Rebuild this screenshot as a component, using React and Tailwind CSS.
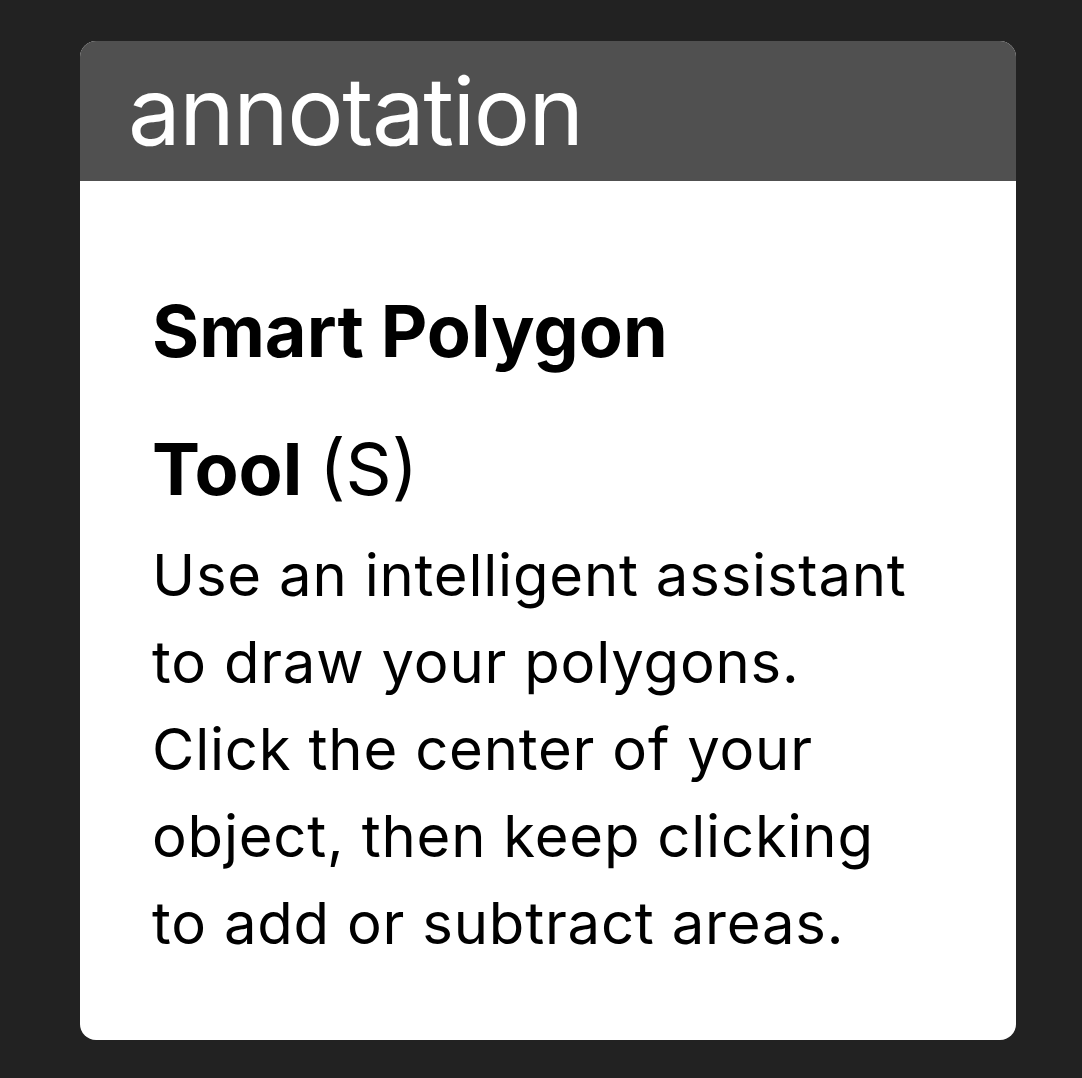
import React from "react";

export default function App() {
    const font = { fontFamily: "Inter, 'Liberation Sans', sans-serif" };

    return (
        <div
            className="min-h-[1078px] w-full bg-[#222222] pt-[41px] pl-[80px]"
            style={font}
        >
            <div className="w-[936px] h-[999px] rounded-[16px] overflow-hidden bg-white flex flex-col">
                {/* Header */}
                <div className="h-[140px] bg-[#505050] pl-[48px] flex-shrink-0">
                    <div className="text-white text-[94px] leading-[140px] font-normal tracking-[-1.5px]">
                        annotation
                    </div>
                </div>

                {/* Body */}
                <div className="pl-[72px] pt-[81px] text-black">
                    <h3 className="text-[72px] leading-[138px] font-bold">
                        Smart Polygon
                        <br />
                        Tool <span className="font-normal">(S)</span>
                    </h3>
                    <p className="text-[58px] leading-[87px] font-normal tracking-[0.8px] whitespace-nowrap -mt-[6px]">
                        Use an intelligent assistant
                        <br />
                        to draw your polygons.
                        <br />
                        Click the center of your
                        <br />
                        object, then keep clicking
                        <br />
                        to add or subtract areas.
                    </p>
                </div>
            </div>
        </div>
    );
}
